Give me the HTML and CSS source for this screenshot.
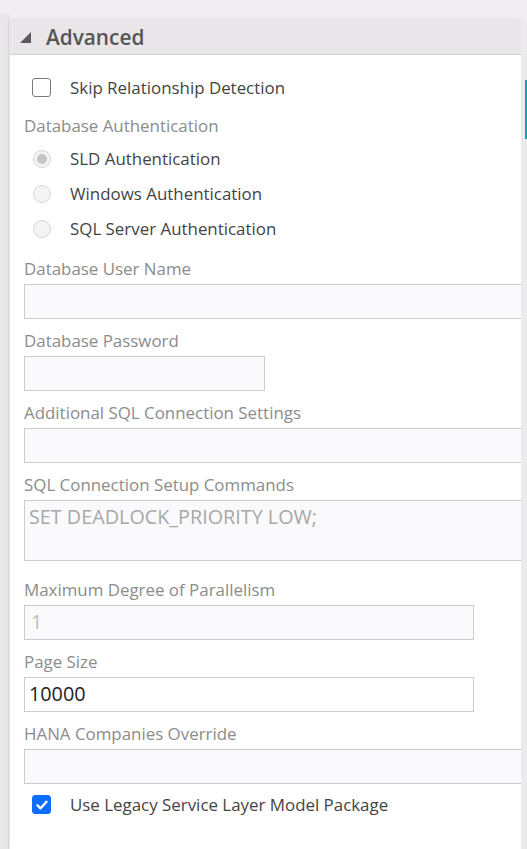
FILE: index.html
```html
<!DOCTYPE html>
<html>
<head>
<meta charset="utf-8">
<link rel="stylesheet" href="styles.css">
</head>
<body>
<div class="page">
  <div class="rail"></div>
  <section class="panel">
    <header class="panel-head">
      <svg class="caret" width="11" height="11" viewBox="0 0 11 11"><polygon points="0,11 11,11 11,0" fill="#5a5a5a"/></svg>
      <span class="title">Advanced</span>
    </header>
    <div class="panel-body">
      <div class="check-row">
        <span class="box"></span>
        <span class="check-label">Skip Relationship Detection</span>
      </div>
      <div class="group-label">Database Authentication</div>
      <div class="radios">
        <div class="radio-row"><span class="radio checked"></span><span class="check-label">SLD Authentication</span></div>
        <div class="radio-row"><span class="radio"></span><span class="check-label">Windows Authentication</span></div>
        <div class="radio-row"><span class="radio"></span><span class="check-label">SQL Server Authentication</span></div>
      </div>
      <div class="field first">
        <div class="label">Database User Name</div>
        <div class="input wide"></div>
      </div>
      <div class="field">
        <div class="label">Database Password</div>
        <div class="input short"></div>
      </div>
      <div class="field">
        <div class="label">Additional SQL Connection Settings</div>
        <div class="input wide"></div>
      </div>
      <div class="field">
        <div class="label">SQL Connection Setup Commands</div>
        <div class="input wide area">SET DEADLOCK_PRIORITY LOW;</div>
      </div>
      <div class="field after-area">
        <div class="label">Maximum Degree of Parallelism</div>
        <div class="input mid disabled-val">1</div>
      </div>
      <div class="field">
        <div class="label">Page Size</div>
        <div class="input mid active">10000</div>
      </div>
      <div class="field">
        <div class="label">HANA Companies Override</div>
        <div class="input wide"></div>
      </div>
      <div class="check-row last">
        <span class="box on"><svg width="14" height="14" viewBox="0 0 14 14"><path d="M2.5 7.3 L5.6 10.3 L11.5 3.8" fill="none" stroke="#fff" stroke-width="2.4" stroke-linecap="round" stroke-linejoin="round"/></svg></span>
        <span class="check-label">Use Legacy Service Layer Model Package</span>
      </div>
    </div>
  </section>
  <div class="edge"><span class="teal"></span></div>
</div>
</body>
</html>
```
FILE: styles.css
```css
* { box-sizing: border-box; }
html, body { margin: 0; padding: 0; }
body {
  background: #f0eef1;
  font-family: "Open Sans", "Liberation Sans", sans-serif;
  width: 527px;
  height: 849px;
  overflow: hidden;
}
.page {
  display: flex;
  align-items: stretch;
  height: 849px;
}
.rail {
  width: 9px;
  margin-top: 14px;
  background: #e8e6e9;
  border-right: 1px solid #dedce0;
  flex: none;
}
.panel {
  width: 511px;
  margin-top: 20px;
  margin-left: 1px;
  background: #fff;
  overflow: hidden;
  flex: none;
  box-shadow: 0 0 4px rgba(0,0,0,0.10);
}
.panel-head {
  height: 35px;
  background: #e8e6e9;
  border-bottom: 1px solid #d4d2d6;
  display: flex;
  align-items: center;
  padding-left: 10px;
}
.caret { margin-right: 15px; margin-top: 1px; }
.title {
  font-size: 20.8px;
  font-weight: 600;
  color: #555;
}
.panel-body {
  padding: 15px 0 0 14px;
}
.check-row {
  height: 35px;
  display: flex;
  align-items: center;
  padding-left: 8px;
}
.check-row.last { margin-top: 3px; }
.box {
  width: 19px;
  height: 19px;
  border: 1.5px solid #7a7a7a;
  border-radius: 3px;
  margin-right: 19px;
  flex: none;
  display: flex;
  align-items: center;
  justify-content: center;
}
.box.on {
  background: #0d6efd;
  border-color: #0d6efd;
}
.check-label {
  font-size: 16.9px;
  color: #444;
}
.group-label, .label {
  font-size: 16.9px;
  color: #8c8c8c;
  height: 22px;
  line-height: 22px;
}
.group-label { margin-top: 10px; }
.radios { margin-top: 4px; }
.radio-row {
  height: 35px;
  display: flex;
  align-items: center;
  padding-left: 9px;
}
.radio {
  width: 18px;
  height: 18px;
  border-radius: 50%;
  border: 1px solid #d6d4d8;
  background: #f4f3f5;
  margin-right: 19px;
  flex: none;
  display: flex;
  align-items: center;
  justify-content: center;
}
.radio.checked::after {
  content: "";
  width: 10px;
  height: 10px;
  border-radius: 50%;
  background: #c4c3c6;
}
.field { margin-top: 11px; }
.field.first { margin-top: 12px; }
.field.after-area { margin-top: 18px; }
.label { margin-bottom: 4px; }
.input {
  height: 35px;
  border: 1px solid #cccbce;
  background: #faf9fb;
  font-size: 19.8px;
  line-height: 26px;
  padding: 3px 4px;
  color: #222;
}
.input.wide { width: 520px; }
.input.short { width: 241px; }
.input.mid { width: 450px; }
.input.area {
  height: 61px;
  color: #a8a8a8;
  padding-top: 3px;
}
.input.disabled-val { color: #bdbdbd; padding-left: 6px; }
.input.active { background: #fff; }
.edge {
  flex: 1;
  position: relative;
  background: #eceaed;
  margin-top: 20px;
}
.teal {
  position: absolute;
  right: 0;
  top: 60px;
  width: 2px;
  height: 59px;
  background: #16a0a4;
}
```
